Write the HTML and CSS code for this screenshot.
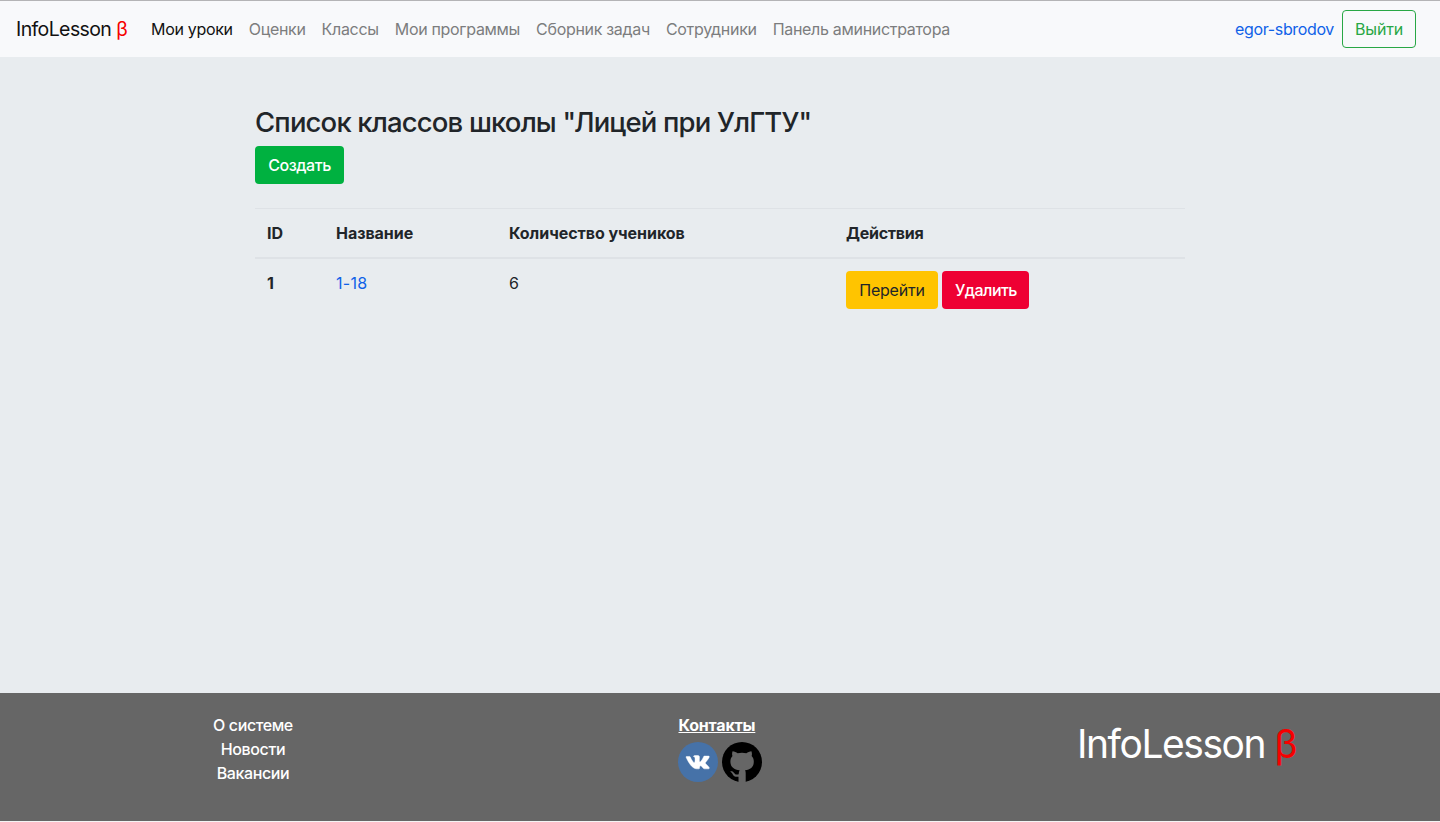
FILE: index.html
```html
<!DOCTYPE html>
<html lang="ru">
<head>
<meta charset="utf-8">
<title>InfoLesson</title>
<link rel="stylesheet" href="styles.css">
</head>
<body>
<nav class="navbar">
  <a class="brand">InfoLesson <span class="beta">β</span></a>
  <ul class="menu">
    <li class="active">Мои уроки</li>
    <li>Оценки</li>
    <li>Классы</li>
    <li>Мои программы</li>
    <li>Сборник задач</li>
    <li>Сотрудники</li>
    <li>Панель аминистратора</li>
  </ul>
  <a class="user">egor-sbrodov</a>
  <button class="btn btn-outline">Выйти</button>
</nav>
<main class="content">
  <h1 class="title">Список классов школы "Лицей при УлГТУ"</h1>
  <button class="btn btn-green">Создать</button>
  <table class="table">
    <thead>
      <tr><th class="c-id">ID</th><th class="c-name">Название</th><th class="c-count">Количество учеников</th><th>Действия</th></tr>
    </thead>
    <tbody>
      <tr>
        <th>1</th><td><a class="link">1-18</a></td><td>6</td>
        <td><div class="actions"><button class="btn btn-yellow">Перейти</button><button class="btn btn-red">Удалить</button></div></td>
      </tr>
    </tbody>
  </table>
</main>
<footer class="footer">
  <div class="links"><a>О системе</a><a>Новости</a><a>Вакансии</a></div>
  <div class="contacts">
    <div class="contacts-title">Контакты</div>
    <div class="icons">
      <svg width="40" height="40" viewBox="0 0 40 40"><circle cx="20" cy="20" r="20" fill="#4672a8"/><path fill="#fff" stroke="#fff" stroke-width=".5" transform="translate(.9 1.300) scale(.96 .94)" d="M19.1 27.2h1.5s.5-.1.7-.3c.2-.2.2-.7.2-.7s0-2 .9-2.3c.9-.3 2.100 2 3.300 2.800.9.6 1.600.5 1.600.5h3.300s1.700-.1.900-1.500c-.1-.1-.5-1-2.500-2.900-2.100-2-1.800-1.600.7-5 1.500-2 2.100-3.300 1.900-3.800-.2-.5-1.300-.4-1.300-.4h-3.700s-.3 0-.5.1c-.2.100-.3.400-.3.400s-.6 1.600-1.400 2.900c-1.700 2.800-2.300 3-2.600 2.800-.6-.4-.5-1.600-.5-2.500 0-2.700.4-3.800-.8-4.100-.4-.1-.7-.2-1.700-.2-1.300 0-2.400 0-3 .3-.4.200-.8.7-.6.700.3 0 .9.200 1.200.6.400.6.400 1.900.4 1.900s.2 3.500-.6 4c-.5.300-1.300-.3-2.900-3-.8-1.400-1.400-2.900-1.400-2.900s-.1-.3-.3-.4c-.3-.2-.6-.2-.6-.2H8.200s-.5 0-.7.200c-.2.200 0 .6 0 .6s2.700 6.400 5.800 9.600c2.900 3 5.800 2.800 5.800 2.800z"/></svg>
      <svg width="40" height="40" viewBox="0 0 40 40"><circle cx="20" cy="20" r="20"/><path fill="#666" d="M10.600 9.300c1.800 0 3.700 1.100 5 1.900a18 18 0 0 1 8.800 0c1.300-.8 3.200-1.900 5-1.900.8 1.900.6 3.700.2 4.800 1.600 1.600 2.200 3.400 2.200 5.400 0 5.800-3.400 8.100-8.800 8.800.5.600.7 1.700.7 2.900V40h-7.200v-5.300c-5 .8-5.500-2-6.400-3.500-.6-.9-1.300-1.300-1.900-1.800 3.300-1 4 2.500 5.700 3 1 .3 2 .1 2.800-.2.100-1.500.4-3 1-3.900-5.800-.7-9.300-3.200-9.300-8.800 0-2 .6-3.800 2.100-5.400-.5-1.300-.6-3 .1-4.800z"/></svg>
    </div>
  </div>
  <div class="logo">InfoLesson <span class="beta">β</span></div>
</footer>
</body>
</html>
```
FILE: styles.css
```css
* { box-sizing: border-box; }
body {
  margin: 0;
  height: 822px;
  display: flex;
  flex-direction: column;
  border-top: 1px solid #b4b4b6;
  border-bottom: 1px solid #f4f4f4;
  background: #e8ecef;
  color: #212529;
  font: 16px/24px Inter, "Noto Sans", sans-serif;
  letter-spacing: -0.2px;
  overflow: hidden;
}
.navbar {
  height: 56px;
  flex: none;
  display: flex;
  align-items: center;
  padding: 0 24px 0 16px;
  background: #f8f9fb;
}
.brand { width: 135px; font-size: 19.5px; letter-spacing: -0.6px; color: #111; white-space: nowrap; }
.beta { color: #f60000; }
.menu { list-style: none; margin: 0; padding: 0; display: flex; gap: 16px; flex: 1; color: #7c7d7e; white-space: nowrap; letter-spacing: -0.31px; }
.active { color: #111; }
.user, .link { color: #1062e8; }
.user { margin-right: 8px; letter-spacing: -0.35px; }
.link { letter-spacing: 0.3px; }
.btn {
  height: 38px;
  padding: 0 12px;
  border: 1px solid transparent;
  border-radius: 4px;
  font: inherit;
  letter-spacing: inherit;
  color: #fff;
  white-space: nowrap;
}
.btn-outline { border-color: #28a745; color: #28a745; background: transparent; width: 74px; }
.btn-green { background: #00b140; width: 89px; font-weight: 500; letter-spacing: -0.45px; }
.btn-yellow { background: #ffc400; color: #212529; width: 92px; }
.btn-red { background: #ee0033; width: 87px; font-weight: 500; letter-spacing: -0.55px; }
.content { width: 930px; margin: 0 auto; padding: 49px 0 0; flex: 1; }
.title { margin: 0 0 7px; font-size: 27.5px; line-height: 33px; font-weight: 500; letter-spacing: -0.84px; white-space: nowrap; }
.table { width: 100%; margin-top: 24px; border-collapse: separate; border-spacing: 0; table-layout: fixed; }
.table th, .table td { padding: 12px; text-align: left; vertical-align: top; }
.table th { font-weight: 700; letter-spacing: -0.04px; }
.table th:last-child { letter-spacing: -0.25px; }
.table thead th { border-top: 1px solid #dee2e6; border-bottom: 2px solid #dee2e6; }
.c-id { width: 69px; }
.c-name { width: 173px; }
.c-count { width: 337px; }
.actions { display: flex; gap: 4px; }
.footer { height: 128px; flex: none; display: flex; background: #666; color: #fff; }
.links { width: 506px; padding-top: 20px; display: flex; flex-direction: column; align-items: center; font-weight: 500; letter-spacing: -0.4px; }
.contacts { width: 428px; padding-top: 20px; display: flex; flex-direction: column; align-items: center; }
.contacts-title { width: 83px; font-weight: 700; text-decoration: underline; }
.icons { display: flex; gap: 4px; margin-top: 5px; }
.logo { flex: 1; padding: 27px 0 0 143px; font-size: 39px; line-height: 48px; letter-spacing: -1.45px; white-space: nowrap; }
```
